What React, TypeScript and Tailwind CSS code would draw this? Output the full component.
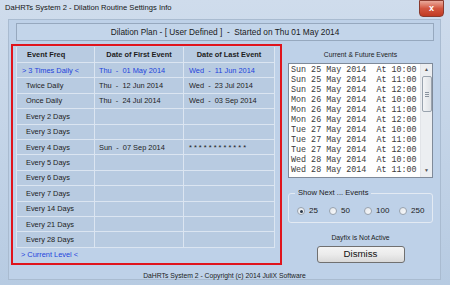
import { Fragment } from "react";

type Row = { freq: string; first?: string; last?: string; current?: boolean };

const rows: Row[] = [
  { freq: "> 3 Times Daily <", first: "Thu  -  01 May 2014", last: "Wed  -  11 Jun 2014", current: true },
  { freq: "Twice Daily", first: "Thu  -  12 Jun 2014", last: "Wed  -  23 Jul 2014" },
  { freq: "Once Daily", first: "Thu  -  24 Jul 2014", last: "Wed  -  03 Sep 2014" },
  { freq: "Every 2 Days" },
  { freq: "Every 3 Days" },
  { freq: "Every 4 Days", first: "Sun  -  07 Sep 2014", last: "* * * * * * * * * * * *" },
  { freq: "Every 5 Days" },
  { freq: "Every 6 Days" },
  { freq: "Every 7 Days" },
  { freq: "Every 14 Days" },
  { freq: "Every 21 Days" },
  { freq: "Every 28 Days" },
];

const events = [
  "Sun 25 May 2014  At 10:00",
  "Sun 25 May 2014  At 11:00",
  "Sun 25 May 2014  At 12:00",
  "Mon 26 May 2014  At 10:00",
  "Mon 26 May 2014  At 11:00",
  "Mon 26 May 2014  At 12:00",
  "Tue 27 May 2014  At 10:00",
  "Tue 27 May 2014  At 11:00",
  "Tue 27 May 2014  At 12:00",
  "Wed 28 May 2014  At 10:00",
  "Wed 28 May 2014  At 11:00",
];

const radios = [
  { label: "25", w: "w-[32px]", on: true },
  { label: "50", w: "w-[35px]" },
  { label: "100", w: "w-[35px]" },
  { label: "250", w: "w-[30px]" },
];

export default function App() {
  return (
    <div className="w-[450px] h-[285px] overflow-hidden flex flex-col bg-gradient-to-b from-[#cfdcec] to-[#b7cbe2] font-['Liberation_Sans',Arial,sans-serif] text-[#1c1c1c]">
      {/* title bar */}
      <div className="h-[19px] shrink-0 flex items-start justify-between">
        <div className="pl-[5px] pt-[3px] text-[7.6px] leading-[10px] text-[#151515]">
          DaHRTs System 2 - Dilation Routine Settings Info
        </div>
        <div className="mr-[6px] w-[25px] h-[17px] rounded-b-[4px] border border-[#8a3a2e] bg-gradient-to-b from-[#e9a99b] via-[#d2553f] to-[#c13a22] flex items-center justify-center text-white text-[9px] font-bold leading-none">
          x
        </div>
      </div>

      {/* client area */}
      <div className="ml-[8px] w-[433px] h-[261px] shrink-0 bg-[#bed1e8] border border-[#a9bbd0] flex flex-col">
        <div className="shrink-0 mt-[3px] ml-[7px] w-[418px] h-[18px] border border-[#96a8be] bg-[#c3d5ea] flex items-center justify-center whitespace-pre text-[8.3px] text-[#1a1a1a]">
          {"Dilation Plan - [ User Defined ]  -  Started on Thu 01 May 2014"}
        </div>

        <div className="shrink-0 mt-[3px] flex">
          {/* red plan box */}
          <div className="ml-[2px] w-[271px] h-[221px] border-2 border-[#e0141c] pl-[3px] pt-[1px] flex flex-col">
            <div className="w-[258px] grid grid-cols-[78px_89px_91px] border-l border-[#dbe5f1] bg-[#b8cbe1] text-[7.4px]">
              <div className="h-[16px] border-b border-r border-[#dbe5f1] flex items-center pl-[10px] font-bold">Event Freq</div>
              <div className="h-[16px] border-b border-r border-[#dbe5f1] flex items-center justify-center font-bold">Date of First Event</div>
              <div className="h-[16px] border-b border-r border-[#dbe5f1] flex items-center justify-center font-bold">Date of Last Event</div>
              {rows.map((r, i) => (
                <Fragment key={i}>
                  <div className={`h-[15.4px] border-b border-r border-[#dbe5f1] flex items-center whitespace-pre ${r.current ? "pl-[5px] text-[#2344dc]" : "pl-[9px]"}`}>
                    {r.freq}
                  </div>
                  <div className={`h-[15.4px] border-b border-r border-[#dbe5f1] flex items-center whitespace-pre pl-[4px] ${r.current ? "text-[#2344dc]" : ""}`}>
                    {r.first ?? ""}
                  </div>
                  <div className={`h-[15.4px] border-b border-r border-[#dbe5f1] flex items-center whitespace-pre pl-[5px] ${r.current ? "text-[#2344dc]" : ""}`}>
                    {r.last ?? ""}
                  </div>
                </Fragment>
              ))}
            </div>
            <div className="mt-[2px] pl-[5px] h-[10px] leading-[10px] text-[7.4px] text-[#2344dc]">
              {"> Current Level <"}
            </div>
          </div>

          {/* right panel */}
          <div className="ml-[6px] w-[145px] flex flex-col">
            <div className="mt-[6px] h-[10px] leading-[10px] text-center text-[6.8px]">Current &amp; Future Events</div>
            <div className="mt-[3px] h-[115px] border border-[#7f8a99] bg-white flex">
              <div className="flex-1 pl-[2px] pt-[1px] font-['Liberation_Mono',monospace] text-[8.4px] leading-[10px] text-[#3a3a3a] whitespace-pre">
                {events.map((e) => (
                  <div key={e}>{e}</div>
                ))}
              </div>
              <div className="w-[12px] bg-[#eceef1] border-l border-[#e2e4e8] flex flex-col items-center">
                <div className="h-[12px] flex items-center justify-center text-[5px] text-[#555]">▲</div>
                <div className="w-[10px] h-[36px] rounded-[2px] border border-[#9aa3ae] bg-gradient-to-r from-[#f3f4f6] to-[#dfe2e6] flex flex-col items-center justify-center gap-[1px]">
                  <div className="w-[4px] h-px bg-[#8a939e]" />
                  <div className="w-[4px] h-px bg-[#8a939e]" />
                  <div className="w-[4px] h-px bg-[#8a939e]" />
                </div>
                <div className="flex-1" />
                <div className="h-[12px] flex items-center justify-center text-[5px] text-[#555]">▼</div>
              </div>
            </div>

            <div className="relative mt-[15px] h-[30px] rounded-[3px] border border-[#e3eaf3] flex items-end pb-[6px] pl-[8px] text-[8px]">
              <div className="absolute -top-[6px] left-[6px] px-[3px] bg-[#bed1e8] text-[7.6px] leading-[10px]">Show Next ... Events</div>
              {radios.map((r) => (
                <div key={r.label} className={`${r.w} flex items-center gap-[4px]`}>
                  <div className="w-[8px] h-[8px] rounded-full border border-[#9aa3ae] bg-gradient-to-br from-[#e6e9ed] to-[#f8f9fa] flex items-center justify-center">
                    {r.on && <div className="w-[3px] h-[3px] rounded-full bg-[#2b3a4c]" />}
                  </div>
                  <span className="leading-[10px]">{r.label}</span>
                </div>
              ))}
            </div>

            <div className="mt-[10px] h-[10px] leading-[10px] text-center text-[6.8px]">Dayfix is Not Active</div>
            <div className="mt-[3px] mx-auto w-[88px] h-[17px] rounded-[3px] border border-[#707070] bg-gradient-to-b from-[#f4f4f4] via-[#ebebeb] to-[#d9d9d9] flex items-center justify-center text-[9.7px] text-[#111]">
              Dismiss
            </div>
          </div>
        </div>

        <div className="h-[14px] shrink-0 pt-[7px] leading-[8px] text-center text-[6.8px]">
          DaHRTs System 2 - Copyright (c) 2014 JuliX Software
        </div>
      </div>
    </div>
  );
}
